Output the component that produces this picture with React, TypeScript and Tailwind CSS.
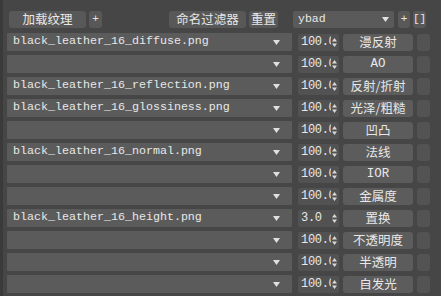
import React from "react";

const rows: [string, string, string][] = [
  ["black_leather_16_diffuse.png", "100.0", "漫反射"],
  ["", "100.0", "AO"],
  ["black_leather_16_reflection.png", "100.0", "反射/折射"],
  ["black_leather_16_glossiness.png", "100.0", "光泽/粗糙"],
  ["", "100.0", "凹凸"],
  ["black_leather_16_normal.png", "100.0", "法线"],
  ["", "100.0", "IOR"],
  ["", "100.0", "金属度"],
  ["black_leather_16_height.png", "3.0", "置换"],
  ["", "100.0", "不透明度"],
  ["", "100.0", "半透明"],
  ["", "100.0", "自发光"],
];

const CJK = "font-['Noto_Sans_CJK_SC','Liberation_Sans',sans-serif]";
const MONO = "font-['Liberation_Mono','DejaVu_Sans_Mono',monospace]";

function Arrow() {
  return (
    <svg width="7" height="5" viewBox="0 0 7 5" className="shrink-0">
      <path d="M0 0 L7 0 L3.5 5 Z" fill="#e0e0e0" />
    </svg>
  );
}

function Spin() {
  return (
    <svg width="5" height="9" viewBox="0 0 5 9" className="shrink-0">
      <path d="M0 3.5 L5 3.5 L2.5 0 Z" fill="#d8d8d8" />
      <path d="M0 5.5 L5 5.5 L2.5 9 Z" fill="#d8d8d8" />
    </svg>
  );
}

export default function App() {
  return (
    <div className="w-[441px] h-[296px] overflow-hidden bg-[#464646] text-[#e8e8e8] flex flex-col border-l-[3px] border-[#3a3a3a]">
      <div className="flex items-center h-[20px] mt-[9px] pl-[6px]">
        <div className={`w-[77px] h-[17px] rounded-[3px] bg-[#585858] flex items-center justify-center text-[12.5px] ${CJK}`}>加载纹理</div>
        <div className={`ml-[3px] w-[13px] h-[17px] rounded-[3px] bg-[#585858] flex items-center justify-center text-[11px] ${MONO}`}>+</div>
        <div className={`ml-[67px] w-[77px] h-[17px] rounded-[3px] bg-[#585858] flex items-center justify-center text-[12.5px] ${CJK}`}>命名过滤器</div>
        <div className={`ml-[3px] w-[29px] h-[17px] rounded-[3px] bg-[#585858] flex items-center justify-center text-[12.5px] ${CJK}`}>重置</div>
        <div className={`ml-[15px] w-[101px] h-[17px] rounded-[2px] bg-[#5a5a5a] flex items-center justify-between px-[5px] text-[11.5px] ${MONO}`}>
          <span>ybad</span>
          <Arrow />
        </div>
        <div className={`ml-[4px] w-[12px] h-[17px] rounded-[3px] bg-[#585858] flex items-center justify-center text-[11px] ${MONO}`}>+</div>
        <div className={`ml-[3px] w-[13px] h-[17px] rounded-[3px] bg-[#585858] flex items-center justify-center text-[11px] ${MONO}`}>[]</div>
      </div>
      <div className="flex flex-col gap-[4px] mt-[4px] pl-[4px]">
        {rows.map(([file, num, label], i) => (
          <div key={i} className="flex items-center h-[18px]">
            <div className={`w-[285px] h-[18px] bg-[#5b5b5b] rounded-[1px] flex items-center justify-between pl-[6px] pr-[12px] text-[11.67px] ${MONO}`}>
              <span className="whitespace-pre">{file}</span>
              <Arrow />
            </div>
            <div className={`ml-[6px] w-[41px] h-[17px] bg-[#525252] rounded-[2px] flex items-center justify-between pl-[3px] pr-[2px] text-[12px] ${MONO}`}>
              <span className="overflow-hidden whitespace-nowrap w-[30px] tracking-[-0.3px]">{num}</span>
              <Spin />
            </div>
            <div className={`ml-[4px] w-[70px] h-[17px] bg-[#5c5c5c] rounded-[3px] flex items-center justify-center text-[12.5px] ${label === "AO" || label === "IOR" ? MONO : CJK}`}>
              {label}
            </div>
            <div className="ml-[4px] w-[13px] h-[17px] bg-[#535353] rounded-[3px]" />
          </div>
        ))}
      </div>
    </div>
  );
}
